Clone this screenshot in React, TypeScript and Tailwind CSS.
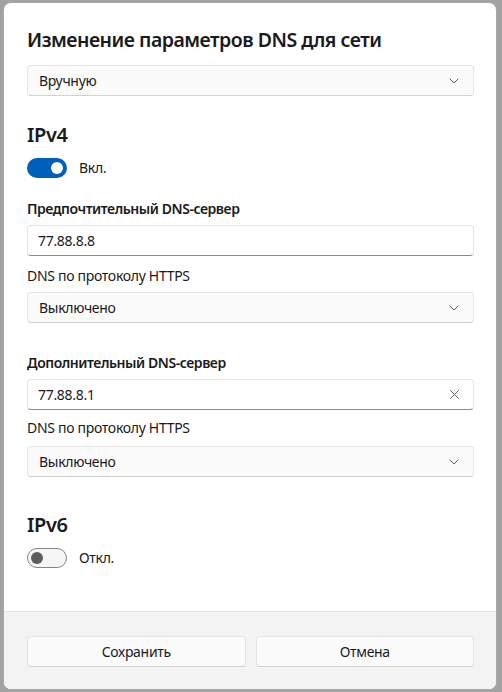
import { ReactNode } from "react";

const font = { fontFamily: '"Noto Sans", "Open Sans", sans-serif' };

function Chevron() {
  return (
    <svg width="10" height="6" viewBox="0 0 10 6" className="flex-shrink-0">
      <path d="M1 1l4 4 4-4" fill="none" stroke="#5f5f5f" strokeWidth="1" strokeLinecap="round" strokeLinejoin="round" />
    </svg>
  );
}

function ClearIcon() {
  return (
    <svg width="9" height="9" viewBox="0 0 9 9" className="flex-shrink-0">
      <path d="M0.5 0.5l8 8M8.5 0.5l-8 8" fill="none" stroke="#5f5f5f" strokeWidth="1" strokeLinecap="round" />
    </svg>
  );
}

function Select({ value, className = "" }: { value: string; className?: string }) {
  return (
    <div
      className={`h-[31px] flex items-center justify-between pl-[11px] pr-[14px] bg-[#fbfbfb] rounded-[4px] border border-[#e5e5e5] border-b-[#d1d1d1] text-[14px] tracking-[-0.3px] text-[#1a1a1a] ${className}`}
    >
      <span>{value}</span>
      <Chevron />
    </div>
  );
}

function TextBox({ value, clearable, className = "" }: { value: string; clearable?: boolean; className?: string }) {
  return (
    <div
      className={`h-[31px] flex items-center justify-between pl-[10px] pr-[14px] bg-white rounded-[4px] border border-[#e5e5e5] border-b-[#8a8a8a] text-[14px] tracking-[-0.3px] text-[#1a1a1a] ${className}`}
    >
      <span>{value}</span>
      {clearable && <ClearIcon />}
    </div>
  );
}

function Toggle({ on, label, className = "" }: { on: boolean; label: string; className?: string }) {
  return (
    <div className={`flex items-center gap-3 ${className}`}>
      {on ? (
        <div className="w-10 h-5 rounded-full bg-[#005fb8] flex items-center justify-end px-1">
          <div className="w-3 h-3 rounded-full bg-white" />
        </div>
      ) : (
        <div className="w-10 h-5 rounded-full bg-[#f6f6f6] border border-[#858585] flex items-center px-[3px]">
          <div className="w-3 h-3 rounded-full bg-[#5d5d5d]" />
        </div>
      )}
      <span className="text-[14px] tracking-[-0.3px] text-[#1a1a1a]">{label}</span>
    </div>
  );
}

function Heading({ children, className = "" }: { children: ReactNode; className?: string }) {
  return (
    <div className={`text-[20px] leading-[28px] font-semibold tracking-[-0.4px] text-[#1a1a1a] ${className}`}>
      {children}
    </div>
  );
}

function Label({ children, strong, className = "" }: { children: ReactNode; strong?: boolean; className?: string }) {
  return (
    <div
      className={`text-[14px] leading-[20px] text-[#1a1a1a] ${
        strong ? "font-semibold tracking-[-0.45px]" : "tracking-[-0.3px]"
      } ${className}`}
    >
      {children}
    </div>
  );
}

function Button({ children }: { children: ReactNode }) {
  return (
    <button className="flex-1 h-[31px] rounded-[4px] bg-[#fbfbfb] border border-[#e5e5e5] border-b-[#d1d1d1] text-[14px] tracking-[-0.3px] text-[#1a1a1a]">
      {children}
    </button>
  );
}

export default function App() {
  return (
    <div className="w-[502px] h-[692px] bg-[#a2a2a2] pt-[2px] pl-[3px] pr-[5px] pb-[2px]" style={font}>
      <div className="h-full flex flex-col bg-white rounded-[8px] border border-[#a9a9a9] overflow-hidden">
        {/* body */}
        <div className="flex-1 flex flex-col pl-[23px] pr-[22px] pt-[23px]">
          <div className="text-[19.5px] leading-[28px] font-semibold tracking-[-0.5px] text-[#1a1a1a]">
            Изменение параметров DNS для сети
          </div>
          <Select value="Вручную" className="mt-[11px]" />

          <Heading className="mt-[25px]">IPv4</Heading>
          <Toggle on label="Вкл." className="mt-2" />

          <Label strong className="mt-[21px]">Предпочтительный DNS-сервер</Label>
          <TextBox value="77.88.8.8" className="mt-[6px]" />
          <Label className="mt-[10px]">DNS по протоколу HTTPS</Label>
          <Select value="Выключено" className="mt-[6px]" />

          <Label strong className="mt-[30px]">Дополнительный DNS-сервер</Label>
          <TextBox value="77.88.8.1" clearable className="mt-[6px]" />
          <Label className="mt-[8px]">DNS по протоколу HTTPS</Label>
          <Select value="Выключено" className="mt-[8px]" />

          <Heading className="mt-[34px]">IPv6</Heading>
          <Toggle on={false} label="Откл." className="mt-2" />
        </div>

        {/* footer */}
        <div className="h-[78px] bg-[#f3f3f3] border-t border-[#e5e5e5] flex gap-[10px] pl-[23px] pr-[22px] pt-[24px]">
          <Button>Сохранить</Button>
          <Button>Отмена</Button>
        </div>
      </div>
    </div>
  );
}
